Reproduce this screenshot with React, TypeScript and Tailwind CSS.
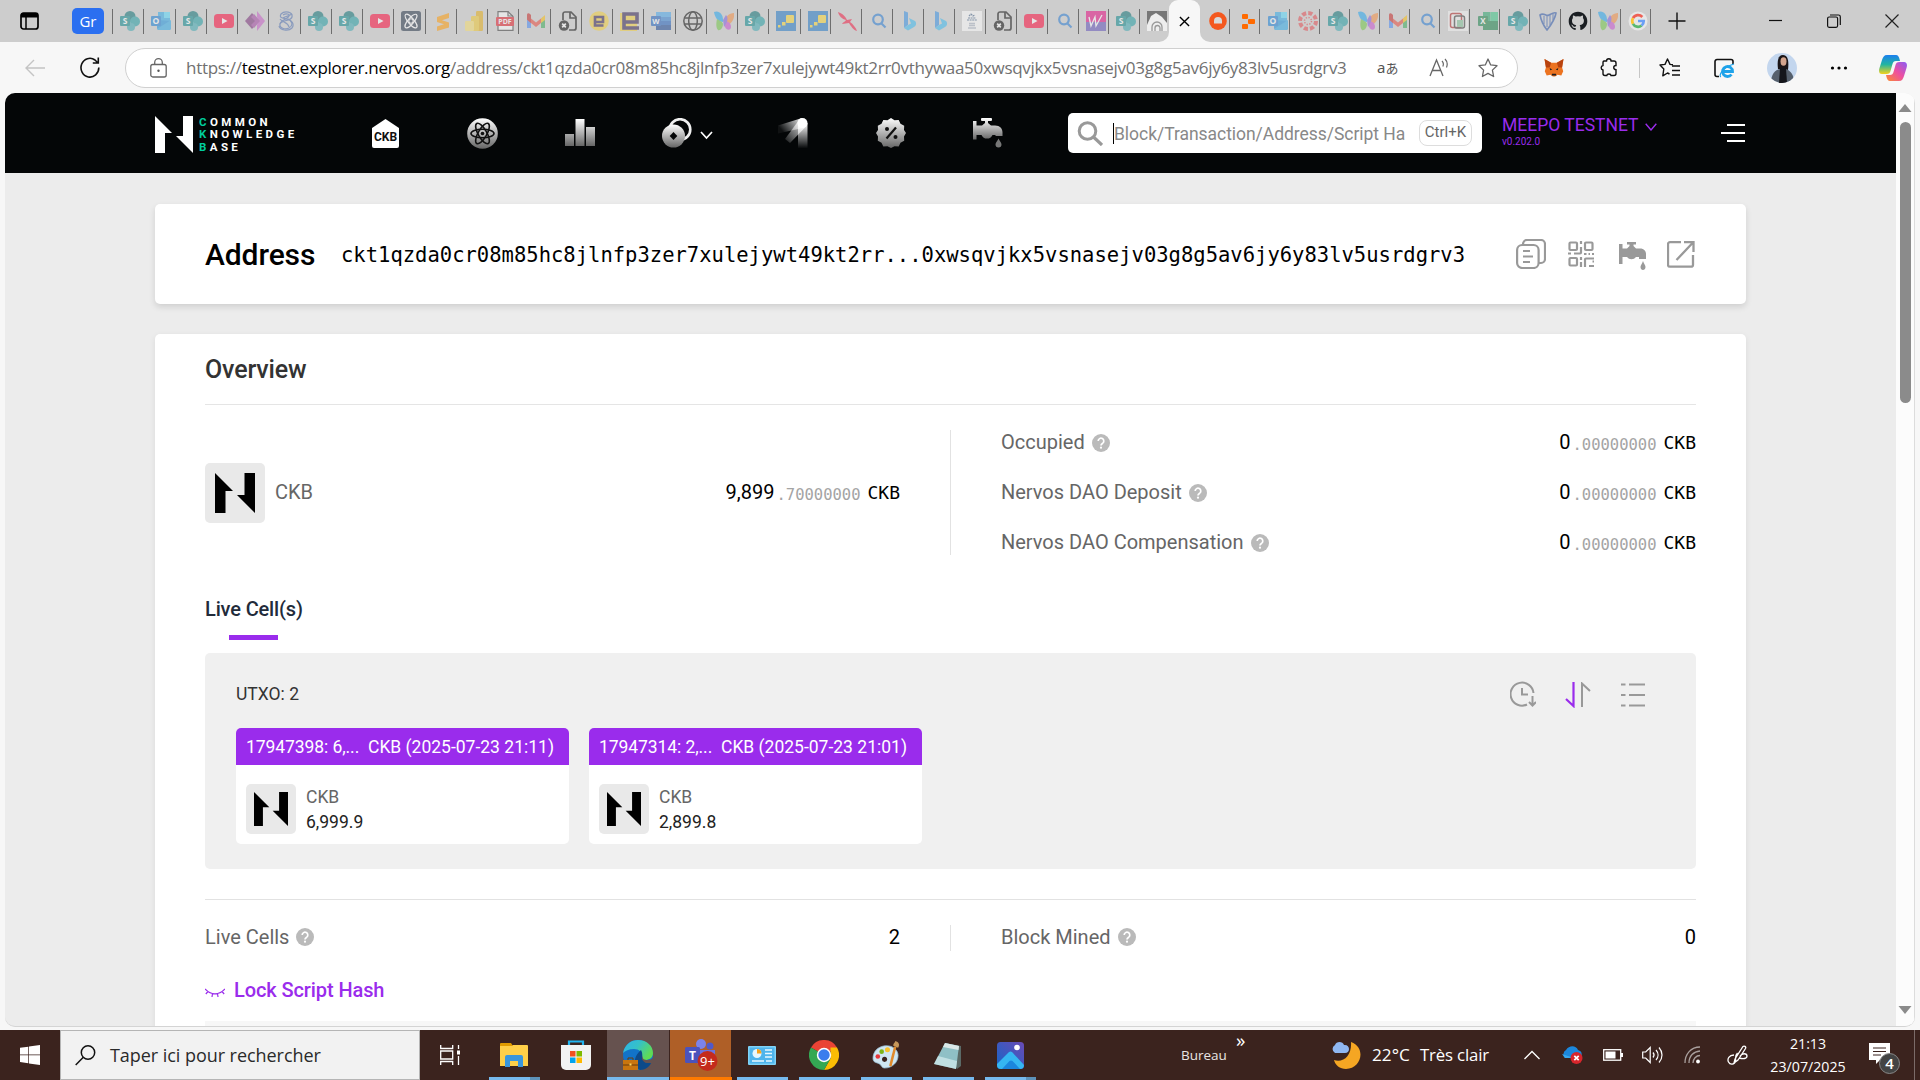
import type { ReactNode } from "react";

type IconKind =
  | "sharepoint" | "outlook" | "youtube" | "powerapps" | "knot" | "atom" | "sublime" | "powerbi" | "pdf" | "gmail"
  | "fileerr" | "eround" | "esquare" | "word" | "globe" | "butterfly" | "stairs" | "bird" | "search" | "bing"
  | "paper" | "wbadge" | "arch" | "orange" | "blocks" | "canvas" | "docs" | "excel" | "harp" | "github" | "google";

const leftTabs: IconKind[] = [
  "sharepoint", "outlook", "sharepoint", "youtube", "powerapps", "knot", "sharepoint", "sharepoint", "youtube", "atom",
  "sublime", "powerbi", "pdf", "gmail", "fileerr", "eround", "esquare", "word", "globe", "butterfly", "sharepoint", "stairs",
];

const middleTabs: IconKind[] = [
  "stairs", "bird", "search", "bing", "bing", "paper", "fileerr", "youtube", "search", "wbadge", "sharepoint", "arch",
];

const rightTabs: IconKind[] = [
  "orange", "blocks", "outlook", "canvas", "sharepoint", "butterfly", "gmail", "search", "docs", "excel", "sharepoint",
  "harp", "github", "butterfly", "google",
];

const vivid: IconKind[] = ["orange", "blocks", "github", "arch", "google"];

function Glyph({ x, y, size, fill, children }: { x: number; y: number; size: number; fill: string; children: string }) {
  return (
    <text x={x} y={y} fontSize={size} fill={fill} fontWeight="700" textAnchor="middle" fontFamily="Open Sans, sans-serif">
      {children}
    </text>
  );
}

function FaviconShape({ kind }: { kind: IconKind }) {
  switch (kind) {
    case "sharepoint":
      return (
        <g>
          <circle cx="10" cy="5.5" r="5.5" fill="#036c70" />
          <circle cx="15" cy="10.5" r="5" fill="#1a9ba1" />
          <circle cx="11" cy="16" r="4" fill="#37a6b0" />
          <rect x="0" y="5" width="10" height="10" rx="1" fill="#038387" />
          <Glyph x={5} y={13} size={8.5} fill="#fff">S</Glyph>
        </g>
      );
    case "outlook":
      return (
        <g>
          <rect x="7" y="1" width="12" height="10" fill="#28a8ea" />
          <path d="M13 1h6v6h-6z" fill="#50d9ff" />
          <path d="M6 9l14 1v7a2 2 0 0 1-2 2H8a2 2 0 0 1-2-2z" fill="#1490df" />
          <path d="M6 18L20 9v8a2 2 0 0 1-2 2H8z" fill="#28a8ea" />
          <rect x="0" y="5" width="10" height="10" rx="1" fill="#0f78d4" />
          <Glyph x={5} y={13} size={8.5} fill="#fff">O</Glyph>
        </g>
      );
    case "youtube":
      return (
        <g>
          <rect x="0" y="3" width="20" height="14" rx="3.5" fill="#ff0033" />
          <path d="M8 7l5.5 3L8 13z" fill="#fff" />
        </g>
      );
    case "powerapps":
      return (
        <g>
          <path d="M7 2l7 8-7 8-7-8z" fill="#742774" />
          <path d="M12 0l8 10-8 10V14l2-4-2-4z" fill="#c658c6" />
          <path d="M9 3l6 7-6 7-3-3 4-4-4-4z" fill="#a13da1" />
        </g>
      );
    case "knot":
      return (
        <g fill="none" stroke="#4a6cb0" strokeWidth="1.2">
          <path d="M5 3c4-4 12-2 11 3-1 4-10 3-12 7-1 4 5 6 9 4 5-3 3-8-2-9C6 7 3 7 5 3z" />
          <path d="M7 4c3-2 7-1 6 1-1 3-8 4-9 8M3 15c1 4 9 6 13 2 3-4-1-8-4-9M4 8c3 4 8 3 9 8M16 3c-3 2-6 2-9 4" />
        </g>
      );
    case "atom":
      return (
        <g>
          <rect width="20" height="20" rx="2.5" fill="#1c2b40" />
          <g fill="none" stroke="#fff" strokeWidth="1.1">
            <ellipse cx="10" cy="10" rx="3" ry="8.5" transform="rotate(40 10 10)" />
            <ellipse cx="10" cy="10" rx="3" ry="8.5" transform="rotate(-40 10 10)" />
            <circle cx="10" cy="10" r="2.2" />
          </g>
        </g>
      );
    case "sublime":
      return <path d="M4 6l12-4v5l-7 2.3 7 2.2v5L4 20v-4.5l7-2.3-7-2.2z" fill="#ff9800" />;
    case "powerbi":
      return (
        <g>
          <rect x="12" y="0" width="7" height="20" rx="1.2" fill="#e6ad10" />
          <rect x="7" y="5" width="8" height="15" rx="1.2" fill="#f2c92c" />
          <rect x="1" y="10" width="9" height="10" rx="1.2" fill="#f7dd6b" />
        </g>
      );
    case "pdf":
      return (
        <g>
          <path d="M3 .6h10l5 5v13.800H3z" fill="#fff" stroke="#333" strokeWidth="1.2" />
          <path d="M13 0v5h5" fill="none" stroke="#333" strokeWidth="1.2" />
          <rect x="1" y="6" width="18" height="9" rx="1" fill="#e2131f" />
          <Glyph x={10} y={13} size={7} fill="#fff">PDF</Glyph>
        </g>
      );
    case "gmail":
      return (
        <g>
          <path d="M1 5v12h4V8z" fill="#4285f4" />
          <path d="M19 5v12h-4V8z" fill="#34a853" />
          <path d="M1 4l4 3.500 5 4 5-4V12l-5 4-5-4L1 8.500z" fill="#ea4335" />
          <path d="M15 7.500L19 4v5l-4 3z" fill="#fbbc04" />
          <path d="M1 4c0-2 2-2 3-1l1 1v8L1 8.500z" fill="#c5221f" />
        </g>
      );
    case "fileerr":
      return (
        <g fill="none" stroke="#000" strokeWidth="1.700">
          <path d="M5 9V3a2 2 0 0 1 2-2h6l5 5v11a2 2 0 0 1-2 2h-5" />
          <path d="M12 1v6h6" />
          <circle cx="6" cy="14.500" r="5.200" fill="#000" stroke="none" />
          <path d="M4.200 12.700l3.600 3.600M7.800 12.700l-3.600 3.600" stroke="#fff" />
        </g>
      );
    case "eround":
      return (
        <g>
          <circle cx="10" cy="10" r="9.800" fill="#f5cf36" />
          <path d="M14.500 14.500H6V6h8v5H7" fill="none" stroke="#2b1a4d" strokeWidth="2.600" />
        </g>
      );
    case "esquare":
      return (
        <g>
          <rect x="0" y="2" width="17" height="18" fill="#f5cf36" />
          <path d="M19 17H4V3h13v8H5" fill="none" stroke="#2b1a4d" strokeWidth="3.600" />
        </g>
      );
    case "word":
      return (
        <g>
          <rect x="5" y="1" width="15" height="5" fill="#41a5ee" />
          <rect x="5" y="6" width="15" height="4" fill="#2b7cd3" />
          <rect x="5" y="10" width="15" height="4" fill="#185abd" />
          <rect x="5" y="14" width="15" height="5" fill="#103f91" />
          <rect x="0" y="5" width="10" height="10" rx="1" fill="#185abd" />
          <Glyph x={5} y={12.8} size={7.5} fill="#fff">W</Glyph>
        </g>
      );
    case "globe":
      return (
        <g fill="none" stroke="#000" strokeWidth="1.500">
          <circle cx="10" cy="10" r="9.200" />
          <ellipse cx="10" cy="10" rx="4.300" ry="9.200" />
          <path d="M1.500 7h17M1.500 13h17" />
        </g>
      );
    case "butterfly":
      return (
        <g>
          <path d="M0 1c5-2 9 2 9 8v2c-5 0-8-4-9-10z" fill="#1aa3f0" />
          <path d="M3 8c3 2 6 3 6 5 0 4-3 7-5 6-2-2-2-7-1-11z" fill="#6cc63f" />
          <path d="M20 2c-5 0-9 4-10 9l1 4c6-1 10-7 9-13z" fill="#f58a3c" />
          <path d="M10 10c4 0 7 2 7 6 0 3-4 4-6 0z" fill="#c94bd0" />
          <path d="M9 9l3-5c3 3 1 8-2 12z" fill="#7b5be0" />
        </g>
      );
    case "stairs":
      return (
        <g>
          <rect width="20" height="20" fill="#1a72c4" />
          <rect x="10" y="4" width="8" height="8" rx="1" fill="#f9d62e" />
          <rect x="6" y="11" width="3.500" height="3.500" fill="#f9d62e" />
          <rect x="2" y="14" width="2.500" height="2.500" fill="#f9d62e" />
        </g>
      );
    case "bird":
      return <path d="M0 1c5 2 7 4 9 8l5-1-2 3c3 2 6 6 7 9-4-1-6-5-8-8-3 0-4 1-7 1 1-2 3-2 4-4C4 8 1 5 0 1z" fill="#f2133c" />;
    case "search":
      return (
        <g fill="none" stroke="#2076d2" strokeWidth="2.200">
          <circle cx="9" cy="8.500" r="4.800" />
          <path d="M12.500 12.500l4 4" />
        </g>
      );
    case "bing":
      return (
        <g>
          <path d="M4 0l4 1.500V14l-4 3z" fill="#2f8de4" />
          <path d="M9 7l6 3c2 2 1 5-1 6l-6 3.500L4 17l4-3 3-1.500z" fill="#35b8f1" />
        </g>
      );
    case "paper":
      return (
        <g>
          <rect width="20" height="20" fill="#fff" />
          <path d="M7 5l2-2 2 2 2-1M5 9h10M6 7h8" stroke="#3f5f86" strokeWidth="1.200" fill="none" strokeDasharray="2 .6" />
          <path d="M7 12.500h6M7 14.500h6M6 17h8" stroke="#aab4c4" strokeWidth="1.300" fill="none" />
        </g>
      );
    case "wbadge":
      return (
        <g>
          <rect width="20" height="11" fill="#e5007d" />
          <rect y="11" width="20" height="9" fill="#5b4bb8" />
          <path d="M3 6l2 9 4-9 1 9 6-11" fill="none" stroke="#fff" strokeWidth="1.300" />
        </g>
      );
    case "arch":
      return (
        <g>
          <rect width="20" height="20" fill="#777" />
          <path d="M0 14L4 5l5-3 6 4 5 6v8H0z" fill="#eee" />
          <path d="M5 20v-4a5 5 0 0 1 10 0v4M8 20v-3a2.500 2.500 0 0 1 5 0v3" fill="none" stroke="#999" strokeWidth="1.300" />
        </g>
      );
    case "orange":
      return (
        <g>
          <ellipse cx="10" cy="10" rx="8.800" ry="9" fill="#f4581e" />
          <path d="M6 12.500V10a4 4 0 0 1 8 0v2.500z" fill="#d9d9d9" />
        </g>
      );
    case "blocks":
      return (
        <g fill="#ff6a00">
          <rect x="4" y="3" width="6" height="5" rx="1" />
          <rect x="10" y="8" width="7" height="5" rx="1" />
          <rect x="4" y="13" width="6" height="5" rx="1" />
        </g>
      );
    case "canvas":
      return (
        <g>
          <circle cx="10" cy="10" r="8" fill="none" stroke="#e4464c" strokeWidth="4" strokeDasharray="4.200 2.080" />
          <circle cx="10" cy="10" r="3.500" fill="none" stroke="#e4464c" strokeWidth="1.500" strokeDasharray="1.300 1.450" />
        </g>
      );
    case "docs":
      return (
        <g>
          <rect width="20" height="20" fill="#f4f4f4" />
          <rect x="2.500" y="2.500" width="11" height="14" rx="2" fill="none" stroke="#b02020" strokeWidth="1.500" />
          <rect x="6.500" y="5" width="10" height="12" rx="2" fill="none" stroke="#333" strokeWidth="1.500" />
          <rect x="9" y="9" width="6" height="7" fill="#7fc095" />
        </g>
      );
    case "excel":
      return (
        <g>
          <rect x="5" y="1" width="7.500" height="9" fill="#21a366" />
          <rect x="12.500" y="1" width="7.500" height="9" fill="#33c481" />
          <rect x="5" y="10" width="15" height="9" fill="#107c41" />
          <rect x="0" y="5" width="10" height="10" rx="1" fill="#107c41" />
          <Glyph x={5} y={12.8} size={8} fill="#fff">X</Glyph>
        </g>
      );
    case "harp":
      return (
        <g fill="none" stroke="#2450a8" strokeWidth="1.600">
          <path d="M2 4c4-3 6 2 9 0 2-1 5-3 7-2-1 6-5 12-9 17C5 14 3 9 2 4z" />
          <path d="M6 5v8M9 5v11M12 4v10M15 3v6" strokeWidth="1" />
        </g>
      );
    case "github":
      return (
        <path
          d="M10 .8C4.800.8.700 5 .700 10.200c0 4.100 2.700 7.600 6.400 8.900.5.100.6-.2.600-.5v-1.700c-2.600.6-3.200-1.200-3.200-1.200-.4-1.100-1-1.400-1-1.400-.9-.6 0-.6 0-.6 1 .1 1.500 1 1.500 1 .8 1.500 2.200 1 2.700.8.100-.6.300-1 .6-1.300-2.100-.2-4.300-1-4.300-4.600 0-1 .4-1.900 1-2.500-.1-.3-.4-1.200.1-2.500 0 0 .8-.3 2.500 1a8.700 8.700 0 0 1 4.700 0c1.700-1.200 2.500-1 2.500-1 .5 1.300.2 2.200.1 2.500.6.600 1 1.500 1 2.500 0 3.600-2.200 4.400-4.300 4.600.3.300.7.900.7 1.700v2.600c0 .3.200.6.700.5 3.600-1.200 6.300-4.700 6.300-8.800C19.300 5 15.200.8 10 .8z"
          fill="#1b1f23"
        />
      );
    case "google":
      return (
        <g>
          <circle cx="10" cy="10" r="9.500" fill="#e6e6e6" />
          <g fill="none" strokeWidth="2.700">
            <path d="M14.300 6A5.700 5.700 0 0 0 5 7.200" stroke="#ee6055" />
            <path d="M5 7.200a5.700 5.700 0 0 0 0 5.600" stroke="#fbc534" />
            <path d="M5 12.800a5.700 5.700 0 0 0 8.600 1.700" stroke="#5bb870" />
            <path d="M13.600 14.500A5.700 5.700 0 0 0 15.700 10H10" stroke="#6a9ff5" />
          </g>
        </g>
      );
  }
}

function Favicon({ kind }: { kind: IconKind }) {
  return (
    <svg viewBox="0 0 20 20" className={vivid.includes(kind) ? "h-5 w-5 shrink-0" : "h-5 w-5 shrink-0 opacity-50"}>
      <FaviconShape kind={kind} />
    </svg>
  );
}

function TabStrip() {
  return (
    <div className="flex h-[42px] shrink-0 items-center bg-[#f7f7f7]">
      <div className="flex h-[42px] w-[1169px] items-center rounded-br-[10px] bg-[#cdcdcd]">
        <svg viewBox="0 0 19 18" className="ml-[20px] h-[18px] w-[19px] shrink-0">
          <rect x="1" y="1" width="17" height="16" rx="2.500" fill="none" stroke="#000" strokeWidth="1.700" />
          <path d="M1 3a2 2 0 0 1 2-2h13a2 2 0 0 1 2 2v2.500H1z" />
          <path d="M6 5v12" stroke="#000" strokeWidth="1.500" />
        </svg>
        <div className="ml-[33px] flex h-[26px] w-8 shrink-0 items-center justify-center rounded-[5px] bg-[#2b6ff0] font-['Open_Sans',sans-serif] text-[15px] text-white">
          <span>Gr</span>
        </div>
        <div className="ml-[8px] flex min-w-0 flex-1 items-center">
          {leftTabs.map((kind, i) => (
            <div key={i} className="flex h-[25px] w-[31.25px] shrink-0 items-center border-l border-[#6e6e6e] pl-[7px]">
              <Favicon kind={kind} />
            </div>
          ))}
          {middleTabs.map((kind, i) => (
            <div key={i} className="flex h-[25px] w-[30.9px] shrink-0 items-center border-l border-[#6e6e6e] pl-[7px]">
              <Favicon kind={kind} />
            </div>
          ))}
        </div>
      </div>
      <div className="flex h-[42px] w-[31px] shrink-0 items-center justify-center bg-[#cdcdcd]">
        <div className="flex h-[42px] w-[31px] items-center justify-center rounded-t-[9px] bg-[#f7f7f7]">
          <svg viewBox="0 0 12 12" className="h-[11px] w-[11px]">
            <path d="M1 1l10 10M11 1L1 11" stroke="#000" strokeWidth="1.500" />
          </svg>
        </div>
      </div>
      <div className="flex h-[42px] flex-1 items-center rounded-bl-[10px] bg-[#cdcdcd] pl-[7.5px]">
        {rightTabs.map((kind, i) => (
          <div key={i} className="flex h-[25px] w-[30.05px] shrink-0 items-center">
            <Favicon kind={kind} />
            <div className="ml-[1.5px] h-[25px] w-px shrink-0 bg-[#6e6e6e]" />
          </div>
        ))}
        <svg viewBox="0 0 18 18" className="ml-[10px] h-[18px] w-[18px] shrink-0">
          <path d="M9 .5v17M.5 9h17" stroke="#111" strokeWidth="1.400" />
        </svg>
        <svg viewBox="0 0 14 14" className="ml-[83px] h-[14px] w-[14px] shrink-0">
          <path d="M0 6.500h13" stroke="#111" strokeWidth="1.200" />
        </svg>
        <svg viewBox="0 0 14 14" className="ml-[44px] h-[14px] w-[14px] shrink-0">
          <rect x=".6" y="3" width="10" height="10.300" rx="1.500" fill="none" stroke="#111" strokeWidth="1.200" />
          <path d="M3 1h8.500a1.800 1.800 0 0 1 1.800 1.800V11" fill="none" stroke="#111" strokeWidth="1.200" />
        </svg>
        <svg viewBox="0 0 14 14" className="ml-[44px] h-[14px] w-[14px] shrink-0">
          <path d="M.5.5l13 13M13.500.5l-13 13" stroke="#222" strokeWidth="1.200" />
        </svg>
      </div>
    </div>
  );
}

function AddressBar() {
  return (
    <div className="flex h-[51px] shrink-0 items-center bg-[#f7f7f7]">
      <svg viewBox="0 0 20 18" className="ml-[25px] h-[18px] w-[20px]">
        <path d="M9 1L1 9l8 8M1 9h19" fill="none" stroke="#c4c4c4" strokeWidth="1.400" />
      </svg>
      <svg viewBox="0 0 20 21" className="ml-[35px] h-[21px] w-[20px]">
        <path d="M18.800 10.500A8.900 9.400 0 1 1 15 3l3 3M18.300.5V6h-5.500" fill="none" stroke="#111" strokeWidth="1.600" />
      </svg>
      <div className="ml-[25px] flex h-[40px] w-[1393px] items-center rounded-full border border-[#d0d0d0] bg-white">
        <svg viewBox="0 0 17 20" className="ml-[24px] h-[20px] w-[17px] shrink-0">
          <rect x=".8" y="6.500" width="15.400" height="12.500" rx="2" fill="none" stroke="#666" strokeWidth="1.300" />
          <path d="M4.700 6.500V4.500a3.800 3.800 0 0 1 7.600 0v2" fill="none" stroke="#666" strokeWidth="1.300" />
          <circle cx="8.500" cy="12.700" r="1.200" fill="#555" />
        </svg>
        <div className="ml-[19px] w-[1161px] shrink-0 font-['Open_Sans',sans-serif] text-[17px] leading-[26px] tracking-[-0.29px] whitespace-nowrap text-[#717171]">
          https://<span className="text-black">testnet.explorer.nervos.org</span>
          /address/ckt1qzda0cr08m85hc8jlnfp3zer7xulejywt49kt2rr0vthywaa50xwsqvjkx5vsnasejv03g8g5av6jy6y83lv5usrdgrv3
        </div>
        <div className="ml-[30px] flex w-[22px] shrink-0 items-baseline font-['Noto_Sans','Noto_Sans_CJK_JP',sans-serif] leading-[20px] text-[#555]">
          <span className="text-[15px]">a</span>
          <span className="text-[13px]">あ</span>
        </div>
        <svg viewBox="0 0 20 20" className="ml-[30px] h-[20px] w-[20px] shrink-0">
          <path d="M1 18L7.500 2 14 18M3.500 12.500h8" fill="none" stroke="#666" strokeWidth="1.300" />
          <path d="M13 3c1.500 1.500 1.500 4 .8 5.500M16 1c2.500 2.500 2.500 6 1.500 8.500" fill="none" stroke="#666" strokeWidth="1.200" />
        </svg>
        <svg viewBox="0 0 20 20" className="ml-[29px] h-[20px] w-[20px] shrink-0">
          <path d="M10 1l2.700 5.900 6.300.8-4.600 4.400 1.200 6.400L10 15.400l-5.600 3.100 1.200-6.400L1 7.700l6.300-.8z" fill="none" stroke="#666" strokeWidth="1.300" strokeLinejoin="round" />
        </svg>
      </div>
      <svg viewBox="0 0 22 20" className="ml-[25px] h-[19px] w-[22px]">
        <path d="M1 1l7 4h6l7-4-1.500 9 1.200 4-2 4.500-4-1-2.500 2h-2.400l-2.500-2-4 1-2-4.500 1.200-4z" fill="#ec7320" />
        <path d="M1 1l7 4-1.500 5-4 0zM21 1l-7 4 1.500 5h4z" fill="#b8430f" />
        <path d="M6.500 10.500l2.700 1.700-2.200.6zM15.500 10.500l-2.700 1.700 2.200.6zM9 16.500h4l.5 2h-5z" fill="#1e1e22" />
      </svg>
      <svg viewBox="0 0 20 20" className="ml-[34px] h-[21px] w-[20px]">
        <path d="M5 3.500h2.500a2.300 2.300 0 0 1 4.600 0H15a2 2 0 0 1 2 2V8c-3 0-3 4.200 0 4.200V16a2 2 0 0 1-2 2h-3c-.2-2-4-2-4.200 0H6a2 2 0 0 1-2-2v-3.500a2.300 2.300 0 0 1 0-4.500V5a1.500 1.500 0 0 1 1-1.500z" fill="none" stroke="#111" strokeWidth="1.400" />
      </svg>
      <div className="ml-[20px] h-5 w-px bg-[#c6c6c6]" />
      <svg viewBox="0 0 22 20" className="ml-[19px] h-[20px] w-[22px]">
        <path d="M14 6.800l-3-.4L8.500 1 6 6.400 1 7l3.800 4-1 6.800L8.500 15l2 1" fill="none" stroke="#111" strokeWidth="1.400" strokeLinejoin="round" />
        <path d="M13 8h8M13 12.500h8M13 17h8" stroke="#111" strokeWidth="1.500" />
      </svg>
      <svg viewBox="0 0 22 20" className="ml-[33px] h-[20px] w-[22px]">
        <path d="M5 18.500H3a2 2 0 0 1-2-2v-13a2 2 0 0 1 2-2h14a2 2 0 0 1 2 2V6" fill="none" stroke="#111" strokeWidth="1.600" />
        <path d="M8 13.500h10.500a5 5 0 1 0-1 3" fill="none" stroke="#1fa3ea" strokeWidth="2.800" />
        <path d="M7 19c-3-1 2-10 13-13" fill="none" stroke="#1fa3ea" strokeWidth="1.200" />
      </svg>
      <svg viewBox="0 0 30 30" className="ml-[31px] h-[30px] w-[30px]">
        <clipPath id="avatar">
          <circle cx="15" cy="15" r="15" />
        </clipPath>
        <g clipPath="url(#avatar)">
          <rect width="30" height="30" fill="#c3d6ee" />
          <path d="M11 16c-1-8 0-14 5-14s6 6 5 15z" fill="#1b1517" />
          <ellipse cx="16.500" cy="8.500" rx="3" ry="4.200" fill="#d3a48d" />
          <path d="M4 30c0-9 4-13 9-14h6c5 2 8 6 8 14z" fill="#56606d" />
          <path d="M13 15h6l1 15h-8z" fill="#15161b" />
        </g>
      </svg>
      <svg viewBox="0 0 18 4" className="ml-[33px] h-[4px] w-[18px]">
        <circle cx="2.500" cy="2" r="1.600" />
        <circle cx="9" cy="2" r="1.600" />
        <circle cx="15.500" cy="2" r="1.600" />
      </svg>
      <svg viewBox="0 0 28 26" className="ml-[31px] h-[26px] w-[28px]">
        <defs>
          <linearGradient id="cpA" x1="0" y1="0" x2="0" y2="1">
            <stop offset="0" stopColor="#1b7ff0" />
            <stop offset=".5" stopColor="#22b5a0" />
            <stop offset="1" stopColor="#f3d21c" />
          </linearGradient>
          <linearGradient id="cpB" x1="1" y1="0" x2="0" y2="1">
            <stop offset="0" stopColor="#8a5cf5" />
            <stop offset=".5" stopColor="#ee4fa0" />
            <stop offset="1" stopColor="#fb8c2f" />
          </linearGradient>
        </defs>
        <path d="M8 0h9c2 0 3 2 3.500 4l.5 2h-4c-2 0-3 1-3.500 3l-2 7c-.5 2-1.500 3-4 3H3c-3 0-3.500-3-2.500-6l2.500-8C4 2 5 0 8 0z" fill="url(#cpA)" />
        <path d="M20 26h-9c-2 0-3-2-3.500-4L7 20h4c2 0 3-1 3.500-3l2-7c.5-2 1.500-3 4-3H25c3 0 3.500 3 2.500 6l-2.500 8c-1 3-2 5-5 5z" fill="url(#cpB)" />
      </svg>
    </div>
  );
}

function SiteHeader() {
  return (
    <div className="flex h-[80px] shrink-0 items-center bg-[#040607]">
      <svg viewBox="0 0 38 37" className="mt-[2px] ml-[150px] h-[37px] w-[38px] shrink-0">
        <path d="M0 0L17 17H10V37H0zM28 0H38V37L21 20H28z" fill="#fff" />
      </svg>
      <div className="ml-[6px] w-[96px] shrink-0 pt-[3px] font-['Roboto',sans-serif] text-[11.5px] leading-[12.5px] font-bold tracking-[3.4px] text-white">
        <div><span className="text-[#00cc9b]">C</span>OMMON</div>
        <div><span className="text-[#00cc9b]">K</span>NOWLEDGE</div>
        <div><span className="text-[#00cc9b]">B</span>ASE</div>
      </div>
      <div className="ml-[76px] flex shrink-0 items-center">
        <svg viewBox="0 0 29 29" className="h-[29px] w-[29px]">
          <path d="M14.500 0L28 9v18a2 2 0 0 1-2 2H3a2 2 0 0 1-2-2V9z" fill="#fff" />
          <text x="14.500" y="22.300" fontSize="12" fontWeight="700" textAnchor="middle" fontFamily="Roboto, sans-serif" fill="#111">CKB</text>
        </svg>
        <svg viewBox="0 0 31 31" className="ml-[67px] h-[31px] w-[31px]">
          <defs>
            <linearGradient id="metal" x1="0" y1="0" x2="0" y2="1">
              <stop offset="0" stopColor="#fff" />
              <stop offset="1" stopColor="#666" />
            </linearGradient>
          </defs>
          <circle cx="15.500" cy="15.500" r="15.300" fill="url(#metal)" />
          <g fill="none" stroke="#111" strokeWidth="1.600">
            <ellipse cx="15.500" cy="15.500" rx="11.500" ry="4.300" />
            <ellipse cx="15.500" cy="15.500" rx="11.500" ry="4.300" transform="rotate(60 15.500 15.500)" />
            <ellipse cx="15.500" cy="15.500" rx="11.500" ry="4.300" transform="rotate(120 15.500 15.500)" />
          </g>
          <circle cx="15.500" cy="15.500" r="1.800" fill="#111" />
        </svg>
        <svg viewBox="0 0 30 28" className="ml-[67px] h-[28px] w-[30px]">
          <path d="M0 15h9v12H0zM10.500 0h9v27h-9zM21 8h9v19h-9z" fill="url(#metal)" />
        </svg>
        <svg viewBox="0 0 30 30" className="ml-[67px] h-[30px] w-[30px]">
          <circle cx="18" cy="11.500" r="10.300" fill="none" stroke="#f0f0f0" strokeWidth="2.600" />
          <circle cx="11.500" cy="18" r="11.500" fill="url(#metal)" />
          <path d="M11.500 14l-3.800 4 3.800 4 3.800-4z" fill="#040607" />
        </svg>
        <svg viewBox="0 0 13 9" className="mt-[4px] ml-[8px] h-[9px] w-[13px]">
          <path d="M1 1l5.500 6L12 1" fill="none" stroke="#fff" strokeWidth="1.700" />
        </svg>
        <svg viewBox="0 0 30 30" className="ml-[65px] h-[30px] w-[30px]">
          <defs>
            <linearGradient id="cometA" x1="1" y1="0" x2="0" y2=".5">
              <stop offset="0" stopColor="#fff" /><stop offset="1" stopColor="#fff" stopOpacity="0.05" />
            </linearGradient>
            <linearGradient id="cometB" x1="0" y1="0" x2="0" y2="1">
              <stop offset="0" stopColor="#fff" /><stop offset="1" stopColor="#fff" stopOpacity="0.02" />
            </linearGradient>
            <linearGradient id="cometC" x1="1" y1="0" x2="0" y2="1">
              <stop offset="0" stopColor="#fff" /><stop offset="1" stopColor="#fff" stopOpacity="0.05" />
            </linearGradient>
          </defs>
          <path d="M24 0L0 7.500v8L26 9.800z" fill="url(#cometA)" />
          <path d="M21 2L7 21l5 4L28.500 8z" fill="url(#cometC)" />
          <path d="M20 5h9.500v25H20z" fill="url(#cometB)" />
          <circle cx="24.500" cy="5" r="5" fill="#fff" />
        </svg>
        <svg viewBox="0 0 30 30" className="ml-[68px] h-[30px] w-[30px]">
          <path d="M15 0l3.500 2.300 4.200-.3 1.800 3.800 3.700 2-.2 4.200L30 15l-2 3.500.2 4.200-3.700 2-1.800 3.800-4.200-.3L15 30l-3.500-1.800-4.200.3-1.800-3.800-3.700-2 .2-4.200L0 15l2-3-.2-4.200 3.700-2L7.300 2l4.200.3z" fill="url(#metal)" />
          <path d="M20 9.500L10.500 20.500" stroke="#111" strokeWidth="2.200" />
          <circle cx="11" cy="11" r="2" fill="#111" />
          <circle cx="19.500" cy="19" r="2" fill="#111" />
        </svg>
        <svg viewBox="0 0 30 30" className="ml-[67px] h-[30px] w-[30px]">
          <path d="M0 3h3.500v4.500H9L12 5V3H9a1 1 0 0 1-1-1V1a1 1 0 0 1 1-1h9a1 1 0 0 1 1 1v1a1 1 0 0 1-1 1h-3v2l3 2.500h4c5 0 7.500 3 7.500 7V18h-7v-1h-3a6 6 0 0 1-11 0H3.500v4.500H0z" fill="url(#metal)" />
          <path d="M25.500 20.500c1.500 3 3 4.500 3 6a3 3 0 0 1-6 0c0-1.500 1.500-3 3-6z" fill="#777" />
        </svg>
      </div>
      <div className="ml-[65px] flex h-[40px] w-[414px] shrink-0 items-center rounded-[5px] bg-white">
        <svg viewBox="0 0 26 25" className="ml-[9px] h-[25px] w-[26px]">
          <circle cx="10.500" cy="10" r="8.300" fill="none" stroke="#999" strokeWidth="3" />
          <path d="M16.500 16L25 24" stroke="#999" strokeWidth="3.200" />
        </svg>
        <div className="ml-[10px] h-[21px] w-px bg-black" />
        <div className="w-[305px] pt-[2px] font-['Roboto',sans-serif] text-[17.5px] leading-[24px] tracking-[-0.04px] whitespace-nowrap text-[#888]">
          Block/Transaction/Address/Script Ha
        </div>
        <div className="flex h-[26px] w-[53px] items-center justify-center rounded-[8px] border border-[#ddd] pb-[2px] font-['Roboto',sans-serif] text-[15px] text-[#666]">
          Ctrl+K
        </div>
      </div>
      <div className="ml-[20px] font-['Roboto',sans-serif] text-[#9a2cec]">
        <div className="flex items-center text-[17.5px] leading-[20px]">
          <span>MEEPO TESTNET</span>
          <svg viewBox="0 0 12 8" className="mt-[3px] ml-[6px] h-[8px] w-[12px]">
            <path d="M.7.7L6 7l5.300-6.300" fill="none" stroke="#9a2cec" strokeWidth="1.400" />
          </svg>
        </div>
        <div className="mb-[3px] pt-px text-[10px] leading-[12px]">v0.202.0</div>
      </div>
      <svg viewBox="0 0 24 20" className="mr-[151px] ml-auto h-[20px] w-[24px]">
        <path d="M6 2h18M0 10h24M6 18h18" stroke="#fff" strokeWidth="2.200" />
      </svg>
    </div>
  );
}

function NervosMark({ big }: { big?: boolean }) {
  return (
    <div className={big ? "flex h-[60px] w-[60px] shrink-0 items-center justify-center rounded-[5px] bg-[#e9e9e9]" : "flex h-[50px] w-[50px] shrink-0 items-center justify-center rounded-[5px] bg-[#e9e9e9]"}>
      <svg viewBox="0 0 40 40" className={big ? "h-10 w-10" : "h-[34px] w-[34px]"}>
        <path d="M0 0L18 18H10.500V40H0zM29.500 0H40V40L22 22H29.500z" />
      </svg>
    </div>
  );
}

function Help() {
  return (
    <svg viewBox="0 0 18 18" className="ml-[7px] h-[18px] w-[18px]">
      <circle cx="9" cy="9" r="9" fill="#bababa" />
      <path d="M6.200 7a2.800 2.800 0 1 1 4.300 2.400c-1 .7-1.500 1-1.500 2.100" fill="none" stroke="#fff" strokeWidth="1.700" />
      <circle cx="9" cy="13.700" r="1.100" fill="#fff" />
    </svg>
  );
}

function Amount({ whole, fraction }: { whole: string; fraction: string }) {
  return (
    <div className="ml-auto flex items-baseline pt-px leading-[25px] text-black">
      <span className="text-[20px]">{whole}</span>
      <span className="relative top-px ml-[2px] font-['DejaVu_Sans_Mono',monospace] text-[15.5px] text-[#a4a4a4]">{fraction}</span>
      <span className="ml-[7px] font-['DejaVu_Sans_Mono',monospace] text-[18px]">CKB</span>
    </div>
  );
}

function BalanceRow({ label }: { label: string }) {
  return (
    <div className="flex h-[25px] items-center">
      <span className="text-[20px] leading-[25px] text-[#666]">{label}</span>
      <Help />
      <Amount whole="0" fraction=".00000000" />
    </div>
  );
}

function CellCard({ block, time, amount }: { block: string; time: string; amount: string }) {
  return (
    <div className="h-[116px] w-[333px] overflow-hidden rounded-[5px] bg-white text-[17.5px]">
      <div className="flex h-[37px] items-center bg-[#9a2cec] pt-px pl-[10px] whitespace-pre text-white">
        <span className="w-[122px] tracking-[-0.08px]">{block}</span>
        <span>{time}</span>
      </div>
      <div className="mt-[19px] ml-[10px] flex">
        <NervosMark />
        <div className="ml-[10px] pt-px leading-[25px]">
          <div className="text-[#666]">CKB</div>
          <div className="text-[#222]">{amount}</div>
        </div>
      </div>
    </div>
  );
}

function AddressCard() {
  return (
    <div className="mt-[31px] flex h-[100px] shrink-0 items-center rounded-[5px] bg-white pl-[50px] shadow-[0_3px_6px_rgba(0,0,0,0.12)]">
      <span className="w-[136px] pt-px text-[30px] leading-[36px] font-medium tracking-[-0.1px] text-black">Address</span>
      <span className="pt-[2px] font-['DejaVu_Sans_Mono',monospace] text-[20.5px] leading-[28px] tracking-[0.01px] whitespace-nowrap text-black">
        ckt1qzda0cr08m85hc8jlnfp3zer7xulejywt49kt2rr...0xwsqvjkx5vsnasejv03g8g5av6jy6y83lv5usrdgrv3
      </span>
      <div className="mr-[51px] ml-auto flex items-center">
        <svg viewBox="0 0 30 30" className="h-[30px] w-[30px]">
          <g fill="none" stroke="#999" strokeWidth="2.200">
            <rect x="1.100" y="6" width="21.500" height="23" rx="5" />
            <path d="M7 6V5a4 4 0 0 1 4-4h14a4 4 0 0 1 4 4v15a4 4 0 0 1-4 4h-2M7 12h7M7 17.500h10M7 23h7" />
          </g>
        </svg>
        <svg viewBox="0 0 26 26" className="ml-[22px] h-[26px] w-[26px]">
          <g fill="none" stroke="#999" strokeWidth="2.200">
            <rect x="1.500" y="1.500" width="7.500" height="7.500" rx="1" />
            <rect x="17" y="1.500" width="7.500" height="7.500" rx="1" />
            <rect x="1.500" y="17" width="7.500" height="7.500" rx="1" />
            <path d="M13 0v3M13 6v5.500a1 1 0 0 1-1 1H6M0 12.500h3M16 13h2.500M20.500 13h1.500M24 13h2M13 16v3M13 21v5M17 26v-7.500a1 1 0 0 1 1-1h8M21 25h5M24.500 20.500h1.500" />
          </g>
        </svg>
        <svg viewBox="0 0 27 28" className="mt-[3px] ml-[25px] h-[28px] w-[27px]">
          <path d="M0 2h3.500v4.500H8L10.500 4V2.500H8V0h9v2.500h-2.500V4L17 6.500h4c4 0 6 2.500 6 5.500v5h-7v-2h-3a5.500 5.500 0 0 1-9 0H3.500v7H0z" fill="#999" />
          <path d="M24 19c1 3 2.500 4.500 2.500 6 0 4-5 4-5 0 0-1.500 1.500-3 2.500-6z" fill="#999" />
        </svg>
        <svg viewBox="0 0 28 27" className="ml-[21px] h-[27px] w-[28px]">
          <g fill="none" stroke="#999" strokeWidth="2.300">
            <path d="M14 1.200H3a2 2 0 0 0-2 2v20.500a2 2 0 0 0 2 2h21a2 2 0 0 0 2-2V14" />
            <path d="M17 1.200h9.500V11M26 1.500L9.500 19" />
          </g>
        </svg>
      </div>
    </div>
  );
}

function OverviewCard() {
  return (
    <div className="mt-[30px] flex-1 rounded-t-[5px] bg-white px-[50px] shadow-[0_2px_6px_rgba(0,0,0,0.08)]">
      <div className="flex h-[71px] items-center border-b border-[#e5e5e5] pt-[2px] text-[25px] font-medium tracking-[-0.15px] text-[#333]">
        Overview
      </div>
      <div className="mt-[25px] flex h-[125px]">
        <div className="flex w-[746px] items-center border-r border-[#e2e2e2] pr-[50px]">
          <NervosMark big />
          <span className="mb-px ml-[10px] text-[20px] leading-[25px] text-[#666]">CKB</span>
          <Amount whole="9,899" fraction=".70000000" />
        </div>
        <div className="ml-[50px] flex flex-1 flex-col justify-between">
          <BalanceRow label="Occupied" />
          <BalanceRow label="Nervos DAO Deposit" />
          <BalanceRow label="Nervos DAO Compensation" />
        </div>
      </div>
      <div className="mt-[41px] text-[20px] leading-[26px] font-medium tracking-[-0.15px] text-[#222b3a]">Live Cell(s)</div>
      <div className="mt-[13px] ml-[24px] h-[5px] w-[49px] bg-[#9a2cec]" />
      <div className="mt-[13px] h-[216px] rounded-[5px] bg-[#f0f0f0] pt-[29px] pl-[31px]">
        <div className="flex h-[25px] items-center pr-[51px] text-[17.5px] text-[#333]">
          <span>UTXO: 2</span>
          <svg viewBox="0 0 26 26" className="mb-px ml-auto h-[26px] w-[26px]">
            <path d="M23.500 12A11.500 11.500 0 1 0 17 23.500M12 7v6.500h6M22.500 15v9M19 21l3.500 3.500L26 21" fill="none" stroke="#999" strokeWidth="2" />
          </svg>
          <svg viewBox="0 0 26 26" className="ml-[29px] h-[26px] w-[26px]">
            <path d="M1 17l7.500 7V0" fill="none" stroke="#9a2cec" strokeWidth="2.200" />
            <path d="M17 25V1.500l8 7.500" fill="none" stroke="#999" strokeWidth="2" />
          </svg>
          <svg viewBox="0 0 24 24" className="ml-[30px] h-[24px] w-[24px]">
            <path d="M0 1.500h4.500M8 1.500h16M0 12h4.500M8 12h16M0 22.500h4.500M8 22.500h16" stroke="#999" strokeWidth="2" />
          </svg>
        </div>
        <div className="mt-[21px] flex gap-5">
          <CellCard block="17947398: 6,..." time="CKB (2025-07-23 21:11)" amount="6,999.9" />
          <CellCard block="17947314: 2,..." time="CKB (2025-07-23 21:01)" amount="2,899.8" />
        </div>
      </div>
      <div className="mt-[30px] flex h-[52px] items-end border-t border-[#e2e2e2]">
        <div className="flex h-[26px] w-[746px] items-center border-r border-[#e2e2e2] pr-[50px] pb-[2px] text-[20px] text-[#666]">
          <span>Live Cells</span>
          <Help />
          <span className="ml-auto text-black">2</span>
        </div>
        <div className="ml-[50px] flex h-[26px] flex-1 items-center pb-[2px] text-[20px] text-[#666]">
          <span>Block Mined</span>
          <Help />
          <span className="ml-auto text-black">0</span>
        </div>
      </div>
      <div className="mt-[26px] flex h-[26px] items-center text-[20px] font-medium tracking-[-0.1px] text-[#9a2cec]">
        <svg viewBox="0 0 20 10" className="mt-[6px] mr-[9px] h-[10px] w-[20px]">
          <path d="M0 1c6 6.500 14 6.500 20 0M3 3.500L.8 6M7.500 5.500L7 9M12.500 5.500L13 9M17 3.500L19.200 6" fill="none" stroke="#9a2cec" strokeWidth="1.200" />
        </svg>
        Lock Script Hash
      </div>
      <div className="mt-[18px] h-[20px] bg-[#f7f7f7]" />
    </div>
  );
}

function PageArea() {
  return (
    <div className="flex h-[937px] shrink-0 bg-[#f7f7f7] px-[5px] pb-[3px]">
      <div className="flex w-[1911px] overflow-hidden rounded-[10px] border-b border-[#d4d4d4] bg-[#ececec] font-['Roboto',sans-serif]">
        <div className="flex w-[1891px] shrink-0 flex-col overflow-hidden">
          <SiteHeader />
          <div className="ml-[150px] flex min-h-0 w-[1591px] flex-1 flex-col">
            <AddressCard />
            <OverviewCard />
          </div>
        </div>
        <div className="flex w-[20px] flex-col items-center border-r border-[#dcdcdc] bg-[#fcfcfc]">
          <svg viewBox="0 0 14 8" className="mt-[11px] h-[8px] w-[14px]"><path d="M7 0l6.500 8H.5z" fill="#8b8b8b" /></svg>
          <div className="mt-[10px] h-[281px] w-[11px] rounded-full bg-[#8b8b8b]" />
          <svg viewBox="0 0 14 8" className="mt-auto mb-[12px] h-[8px] w-[14px]"><path d="M7 8L.5 0h13z" fill="#8b8b8b" /></svg>
        </div>
      </div>
    </div>
  );
}

function TaskApp({ children, tile, bar }: { children: ReactNode; tile?: string; bar?: string }) {
  return (
    <div className={"flex h-[50px] w-[62px] shrink-0 flex-col items-center " + (tile ?? "")}>
      <div className="flex h-[47px] w-[62px] items-center justify-center pt-[3px]">{children}</div>
      <div className={"h-[3px] " + (bar ?? "w-[51px] bg-[#76b9ed]")} />
    </div>
  );
}

function Taskbar() {
  return (
    <div className="flex h-[50px] shrink-0 items-center bg-[#3b231e] font-['Open_Sans',sans-serif]">
      <svg viewBox="0 0 20 20" className="ml-[20px] h-[20px] w-[20px] shrink-0">
        <path d="M0 2.800l8.300-1.100v7.800H0zM9 1.600L20 0v9.500H9zM0 10.300h8.300v7.900L0 17.100zM9 10.300h11V20L9 18.400z" fill="#fff" />
      </svg>
      <div className="ml-[20px] flex h-[50px] w-[360px] shrink-0 items-center border border-[#b5b5b5] bg-[#f2f2f2]">
        <svg viewBox="0 0 21 21" className="ml-[14px] h-[21px] w-[21px]">
          <circle cx="13" cy="7.500" r="6.700" fill="none" stroke="#111" strokeWidth="1.500" />
          <path d="M8.300 12.300L.7 20" stroke="#111" strokeWidth="1.500" />
        </svg>
        <span className="ml-[14px] text-[18px] tracking-[-0.05px] whitespace-nowrap text-[#2a2a2a]">Taper ici pour rechercher</span>
      </div>
      <svg viewBox="0 0 20 20" className="ml-[20px] h-[20px] w-[20px] shrink-0">
        <path d="M.7 0v3.500h12V0M.7 20v-3.500h12V20M.7 6h12v8h-12zM18.500 0v4M18.500 11v9" fill="none" stroke="#fff" strokeWidth="1.300" />
        <path d="M17 5.500h3v4h-3z" fill="#fff" />
      </svg>
      <div className="ml-[23px] flex">
        <TaskApp bar="w-[51px] bg-gradient-to-r from-[#76b9ed] from-80% to-[#5d92b9] to-80%">
          <svg viewBox="0 0 28 24" className="h-[24px] w-[28px]">
            <path d="M0 1a1 1 0 0 1 1-1h10l2 3H0z" fill="#e09b00" />
            <path d="M0 3h12l1-1h14a1 1 0 0 1 1 1v20H0z" fill="#ffcf48" />
            <path d="M5 24V14a2 2 0 0 1 2-2h14a2 2 0 0 1 2 2v10h-5v-6h-8v6z" fill="#3a96dd" />
          </svg>
        </TaskApp>
        <TaskApp bar="w-0">
          <svg viewBox="0 0 30 30" className="h-[30px] w-[30px]">
            <path d="M8 6V1.500h14V6" fill="none" stroke="#20b4f0" strokeWidth="2.200" />
            <path d="M0 5h30v20a5 5 0 0 1-5 5H5a5 5 0 0 1-5-5z" fill="#f2f2f2" />
            <path d="M9 11h5.500v5.500H9z" fill="#f25022" /><path d="M15.500 11H21v5.500h-5.500z" fill="#7fba00" />
            <path d="M9 17.500h5.500V23H9z" fill="#00a4ef" /><path d="M15.500 17.500H21V23h-5.500z" fill="#ffb900" />
          </svg>
        </TaskApp>
        <TaskApp tile="bg-[#66524f]" bar="w-[62px] bg-[#76b9ed]">
          <svg viewBox="0 0 30 30" className="h-[30px] w-[30px]">
            <defs>
              <linearGradient id="edgeTop" x1="0" y1="0" x2="1" y2=".5">
                <stop offset="0" stopColor="#2fb3e8" /><stop offset=".5" stopColor="#35c1c8" /><stop offset="1" stopColor="#5fdc54" />
              </linearGradient>
            </defs>
            <circle cx="15" cy="15" r="15" fill="#1273c8" />
            <path d="M0 13C2 4 8 0 15 0c9 0 15 6 15 13 0 5-4 7-8 7-3 0-4-1-3-3 1-5-3-8-8-8C6 9 2 11 0 13z" fill="url(#edgeTop)" />
            <path d="M18 10c3 6-1 8 4 12 2 1 5 1 7-1-2 6-7 9-12 9-6-3-8-12 1-20z" fill="#0c4a8a" />
            <path d="M20 16c-1 3 1 4 5 4 2 0 4-1 5-2v5h-7c-4-2-5-5-3-7z" fill="#66524f" />
            <path d="M0 20h15v10H0z" fill="#c9750e" /><path d="M5 20v-2h5v2M0 25h15" stroke="#6b3c08" fill="none" /><path d="M6.500 23.500h2v2h-2z" fill="#ffd65c" />
          </svg>
        </TaskApp>
        <TaskApp tile="border-l border-[#3b231e] bg-[#af5f27]" bar="w-[62px] bg-[#ff7a00]">
          <svg viewBox="0 0 34 32" className="h-[32px] w-[34px]">
            <circle cx="17" cy="5" r="5" fill="#7b83eb" /><circle cx="26" cy="7" r="3.500" fill="#5059c9" />
            <path d="M11 11h20v8a7 7 0 0 1-7 7h-6a7 7 0 0 1-7-7z" fill="#6a73dc" />
            <rect x="1" y="8" width="15" height="16" rx="1.500" fill="#4b53bc" />
            <Glyph x={8.5} y={20.5} size={12} fill="#fff">T</Glyph>
            <circle cx="23.500" cy="22" r="10" fill="#c42b1c" />
            <text x="23.500" y="26.500" fontSize="13" textAnchor="middle" fill="#fff" fontFamily="Open Sans, sans-serif">9+</text>
          </svg>
        </TaskApp>
        <TaskApp>
          <svg viewBox="0 0 28 19" className="h-[19px] w-[28px]">
            <rect width="28" height="19" rx="1" fill="#7fd2f7" /><rect x="1.500" y="1.500" width="25" height="16" fill="#4fb4ec" />
            <circle cx="9" cy="7.500" r="4.500" fill="#e8f7ff" /><path d="M9 7.500V3a4.500 4.500 0 0 1 4.500 4.500z" fill="#f6a21d" />
            <path d="M17 4h7M17 7.500h7M17 11h7M4 15h12M18 15h6" stroke="#e8f7ff" strokeWidth="1.600" />
          </svg>
        </TaskApp>
        <TaskApp>
          <svg viewBox="0 0 30 30" className="h-[30px] w-[30px]">
            <path d="M15 15L2 7.500A15 15 0 0 1 28 7.500z" fill="#ea4335" />
            <path d="M28 7.500A15 15 0 0 1 15 30l6.500-11.500V7.500z" fill="#fbbc04" /><path d="M2 7.500A15 15 0 0 0 15 30l6.500-11.500L15 15z" fill="#34a853" />
            <circle cx="15" cy="15" r="7.200" fill="#fff" /><circle cx="15" cy="15" r="5.700" fill="#3b7ded" />
          </svg>
        </TaskApp>
        <TaskApp>
          <svg viewBox="0 0 30 30" className="h-[29px] w-[29px]">
            <path d="M13 5c8-1 14 4 14 10 0 7-6 13-14 13-3 0-3-3-5-4-2-2-7-1-7-6C1 11 6 6 13 5z" fill="#cfe6f2" stroke="#8fb6cc" strokeWidth=".8" />
            <circle cx="6" cy="16" r="2.400" fill="#e5383b" /><circle cx="10" cy="11" r="2.400" fill="#7cb518" /><circle cx="16" cy="9" r="2.600" fill="#f9c22e" />
            <circle cx="13" cy="19" r="2.600" fill="#3b231e" />
            <path d="M24 6L19 26" stroke="#e08a2c" strokeWidth="2.600" /><path d="M22 5c0-3 2-3 2-5 4 1 5 4 3 7z" fill="#c4965a" />
          </svg>
        </TaskApp>
        <TaskApp>
          <svg viewBox="0 0 28 27" className="h-[27px] w-[28px]">
            <path d="M11 1l16 3v20l-4 3z" fill="#5b6a67" /><path d="M11 1l14 3-3 23L0 22z" fill="#8fc0c6" /><path d="M11 1l14 3-.5 4L9 5z" fill="#dbe8e8" /><path d="M4 14l19 5-1 8-22-5z" fill="#d4ecee" opacity=".7" />
          </svg>
        </TaskApp>
        <TaskApp bar="w-[51px] bg-gradient-to-r from-[#76b9ed] from-80% to-[#5d92b9] to-80%">
          <svg viewBox="0 0 27 27" className="h-[27px] w-[27px]">
            <defs>
              <linearGradient id="photo" x1="0" y1="1" x2="1" y2="0"><stop offset="0" stopColor="#1466c8" /><stop offset="1" stopColor="#6a4ab5" /></linearGradient>
            </defs>
            <rect width="27" height="27" rx="3.500" fill="url(#photo)" />
            <path d="M0 22L12 10q1.500-1.200 3 0l12 13a4 4 0 0 1-4 4H4a4 4 0 0 1-4-4z" fill="#35b6f2" />
            <path d="M5 27l7.500-8q1.500-1.200 3 0L23 27z" fill="#1b86dd" /><circle cx="20" cy="5.500" r="2.800" fill="#fff" />
          </svg>
        </TaskApp>
      </div>
      <span className="ml-[140px] w-[46px] text-[13.5px] text-[#e8e4e3]">Bureau</span>
      <span className="-mt-[31px] ml-[9px] w-[10px] text-[19px] leading-5 text-white">»</span>
      <svg viewBox="0 0 30 28" className="ml-[85px] h-[28px] w-[30px] shrink-0">
        <path d="M20 1c16 6 10 27-5 27-6 0-11-4-12-9 10 3 18-5 17-18z" fill="#f5a623" />
        <path d="M4 12a4.500 4.500 0 0 1 0-8c1-4 8-4 9 0 6-1 7 8 1 8z" fill="#8fb7f2" />
      </svg>
      <span className="ml-[11px] w-[38px] text-[17.2px] whitespace-nowrap text-white">22°C</span>
      <span className="ml-[10px] text-[16.8px] tracking-[-0.16px] whitespace-nowrap text-white">Très clair</span>
      <div className="ml-auto flex shrink-0 items-center">
        <svg viewBox="0 0 16 10" className="h-[10px] w-[16px]"><path d="M.5 9L8 1.500 15.500 9" fill="none" stroke="#fff" strokeWidth="1.300" /></svg>
        <svg viewBox="0 0 21 18" className="ml-[22px] h-[18px] w-[21px]">
          <path d="M3 12a5 5 0 0 1 1-8c3-5 10-5 12 0 4 1 5 5 2 8z" fill="#1c87dc" /><path d="M0 8l12 4H3z" fill="#36a9f0" />
          <circle cx="14.500" cy="12" r="6" fill="#d8262c" /><path d="M12.300 9.800l4.400 4.400M16.700 9.800l-4.400 4.400" stroke="#fff" strokeWidth="1.700" />
        </svg>
        <svg viewBox="0 0 20 12" className="ml-[20px] h-[12px] w-[20px]">
          <rect x=".7" y=".7" width="17" height="10.500" fill="none" stroke="#fff" strokeWidth="1.300" /><path d="M2.500 2.500h10v7h-10zM18 4h2v4h-2z" fill="#fff" />
        </svg>
        <svg viewBox="0 0 21 18" className="ml-[19px] h-[18px] w-[21px]">
          <path d="M.7 6v6h3l4.500 4.500v-15L3.700 6z" fill="none" stroke="#fff" strokeWidth="1.200" />
          <path d="M11 6.500c1.300 1.500 1.300 3.500 0 5M14 4c2.700 3 2.700 7 0 10M17 1.500c4 4.500 4 10.500 0 15" fill="none" stroke="#fff" strokeWidth="1.200" />
        </svg>
        <svg viewBox="0 0 17 18" className="ml-[21px] h-[18px] w-[17px]">
          <path d="M1 17C1 8 7 1 16 1M5 17C5 10 9.500 5.500 16 5M9 17c0-4 3-7.500 7-7.500" fill="none" stroke="#aaa09e" strokeWidth="1.300" /><circle cx="14" cy="15.500" r="1.900" fill="#fff" />
        </svg>
        <svg viewBox="0 0 21 21" className="ml-[26px] h-[21px] w-[21px]">
          <path d="M8 14L16 1.500c1-1 3.500 0 2.500 2L11 15l-4 3zM7 10c-5 0-7 4-5.500 7s6 3 7-1c.5-3-1-5 2-8M13 11c2-3 7-3 7 0s-4 3-8 2" fill="none" stroke="#fff" strokeWidth="1.300" />
        </svg>
        <div className="ml-[17px] w-[86px] text-center text-[14.2px] leading-[23px] text-white">
          <div>21:13</div>
          <div>23/07/2025</div>
        </div>
        <svg viewBox="0 0 31 31" className="mt-[6px] mr-[5px] ml-[18px] h-[31px] w-[31px]">
          <path d="M0 0h21v17H11l-4 4v-4H0z" fill="#fff" /><path d="M4 5h13M4 8.500h13M4 12h8" stroke="#3b231e" strokeWidth="1.200" />
          <circle cx="20.500" cy="20.500" r="10" fill="#444" stroke="#888" />
          <text x="20.500" y="26" fontSize="15" fontWeight="600" textAnchor="middle" fill="#fff" fontFamily="Open Sans, sans-serif">4</text>
        </svg>
        <div className="mr-[5px] ml-[9px] h-[50px] w-px bg-[#7b6b68]" />
      </div>
    </div>
  );
}

export default function App() {
  return (
    <div className="flex h-[1080px] w-[1920px] flex-col overflow-hidden bg-[#f7f7f7]">
      <TabStrip />
      <AddressBar />
      <PageArea />
      <Taskbar />
    </div>
  );
}
